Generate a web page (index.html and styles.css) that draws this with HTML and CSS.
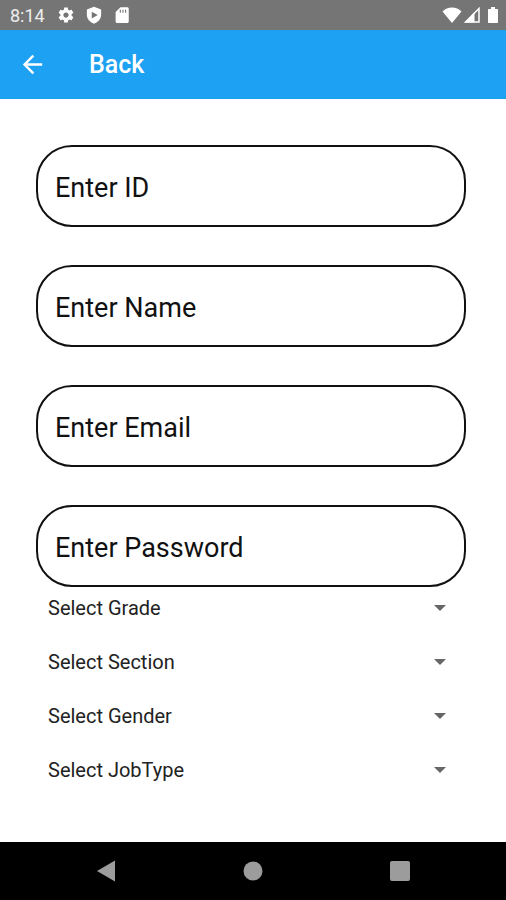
FILE: index.html
```
<!DOCTYPE html>
<html lang="en">
<head>
    <meta charset="UTF-8">
    <meta name="viewport" content="width=device-width, initial-scale=1.0">
    <title>Back</title>
    <link rel="stylesheet" href="styles.css">
</head>
<body>
    <div class="status-bar">
        <span class="status-time">8:14</span>
        <div class="status-icons">
            <svg viewBox="0 0 24 24" fill="currentColor">
                <path d="M19.43 12.98c.04-.32.07-.64.07-.98s-.03-.66-.07-.98l2.11-1.65c.19-.15.24-.42.12-.64l-2-3.46c-.12-.22-.39-.3-.61-.22l-2.49 1c-.52-.4-1.08-.73-1.69-.98l-.38-2.65C14.46 2.18 14.25 2 14 2h-4c-.25 0-.46.18-.49.42l-.38 2.65c-.61.25-1.17.59-1.69.98l-2.49-1c-.23-.09-.49 0-.61.22l-2 3.46c-.13.22-.07.49.12.64l2.11 1.65c-.04.32-.07.65-.07.98s.03.66.07.98l-2.11 1.65c-.19.15-.24.42-.12.64l2 3.46c.12.22.39.3.61.22l2.49-1c.52.4 1.08.73 1.69.98l.38 2.65c.03.24.24.42.49.42h4c.25 0 .46-.18.49-.42l.38-2.65c.61-.25 1.17-.59 1.69-.98l2.49 1c.23.09.49 0 .61-.22l2-3.46c.12-.22.07-.49-.12-.64l-2.11-1.65zM12 15.5c-1.93 0-3.5-1.57-3.5-3.5s1.57-3.5 3.5-3.5 3.500 1.570 3.500 3.500-1.570 3.500-3.500 3.500z"></path>
            </svg>
            <svg viewBox="0 0 24 24" fill="currentColor">
                <path fill-rule="evenodd" d="M12 1L2.500 4.500v7c0 5.500 4 10 9.500 12 5.500-2 9.500-6.500 9.500-12v-7L12 1zM9 7.500l8 4.500-8 4.500z"></path>
            </svg>
            <svg viewBox="0 0 24 24" fill="currentColor">
                <path fill-rule="evenodd" d="M19 1.500H10L3.500 8v12.500c0 1.100.9 2 2 2H19c1.100 0 2-.9 2-2v-17c0-1.100-.9-2-2-2zM9 5h1.500v4H9zM12.500 5H14v4h-1.500zM16 5h1.500v4H16z"></path>
            </svg>
        </div>
        <div class="signal-icons">
            <svg class="wifi-icon" viewBox="0 0 20 16" fill="currentColor">
                <path d="M10 16L.5 4.500C3 2 6.300.5 10 .5s7 1.500 9.500 4z"></path>
            </svg>
            <svg class="cell-icon" viewBox="0 0 16 16">
                <path d="M15 1.500V15H1.500z" fill="none" stroke="currentColor" stroke-width="1.500"></path>
                <path d="M10.500 5v10.500H1z" fill="currentColor"></path>
            </svg>
            <svg class="battery-icon" viewBox="0 0 10 16" fill="currentColor">
                <path d="M3 0h4v2h2c.6 0 1 .4 1 1v12c0 .6-.4 1-1 1H1c-.6 0-1-.4-1-1V3c0-.6.4-1 1-1h2z"></path>
            </svg>
        </div>
    </div>

    <header class="app-bar">
        <button class="back-btn" type="button" aria-label="Go back">
            <svg viewBox="0 0 24 24" fill="currentColor">
                <path d="M20 11H7.830l5.590-5.590L12 4l-8 8 8 8 1.410-1.410L7.830 13H20v-2z"></path>
            </svg>
        </button>
        <h1 class="app-title">Back</h1>
    </header>

    <main class="content">
        <form class="user-form">
            <div class="text-fields">
                <input class="text-field" type="text" name="id" placeholder="Enter ID" aria-label="Enter ID">
                <input class="text-field" type="text" name="name" placeholder="Enter Name" aria-label="Enter Name">
                <input class="text-field" type="email" name="email" placeholder="Enter Email" aria-label="Enter Email">
                <input class="text-field" type="password" name="password" placeholder="Enter Password" aria-label="Enter Password">
            </div>

            <div class="select-fields">
                <div class="select-row">
                    <select name="grade" aria-label="Grade">
                        <option>Select Grade</option>
                    </select>
                </div>
                <div class="select-row">
                    <select name="section" aria-label="Section">
                        <option>Select Section</option>
                    </select>
                </div>
                <div class="select-row">
                    <select name="gender" aria-label="Gender">
                        <option>Select Gender</option>
                    </select>
                </div>
                <div class="select-row">
                    <select name="jobtype" aria-label="Job type">
                        <option>Select JobType</option>
                    </select>
                </div>
            </div>
        </form>
    </main>

    <nav class="nav-bar">
        <button type="button" aria-label="System back">
            <svg viewBox="0 0 20 22" fill="currentColor">
                <path d="M19 .5v21L1 11z"></path>
            </svg>
        </button>
        <button type="button" aria-label="Home">
            <svg viewBox="0 0 20 22" fill="currentColor">
                <circle cx="10" cy="11" r="9.500"></circle>
            </svg>
        </button>
        <button type="button" aria-label="Recent apps">
            <svg viewBox="0 0 20 22" fill="currentColor">
                <rect y="1" width="20" height="20" rx="2"></rect>
            </svg>
        </button>
    </nav>
</body>
</html>
```

FILE: styles.css
```
* {
    margin: 0;
    padding: 0;
    box-sizing: border-box;
}

body {
    display: flex;
    flex-direction: column;
    min-height: 100vh;
    background: #fff;
    color: #111;
    font-family: Roboto, "Liberation Sans", sans-serif;
}

button {
    border: none;
    background: transparent;
    color: inherit;
    cursor: pointer;
}

svg {
    display: block;
}

/* Status bar */
.status-bar {
    display: flex;
    align-items: center;
    height: 30px;
    padding: 0 8px 0 10px;
    background: #757575;
    color: #fff;
}

.status-time {
    font-size: 18px;
    color: #eee;
}

.status-icons {
    display: flex;
    gap: 10px;
    margin-left: 12px;
}

.status-icons svg {
    width: 18px;
    height: 18px;
}

.signal-icons {
    display: flex;
    gap: 2px;
    margin-left: auto;
}

.signal-icons svg {
    height: 16px;
}

.wifi-icon {
    width: 20px;
}

.cell-icon {
    width: 16px;
}

.signal-icons .battery-icon {
    width: 10px;
    margin-left: 6px;
}

/* App bar */
.app-bar {
    display: flex;
    align-items: center;
    gap: 42px;
    height: 69px;
    padding: 0 18px;
    background: #1da1f2;
    color: #fff;
}

.back-btn svg {
    width: 29px;
    height: 29px;
}

.app-title {
    font-size: 25px;
    font-weight: 500;
}

/* Form */
.content {
    flex: 1;
    padding: 46px 40px 40px 36px;
}

.text-fields {
    display: flex;
    flex-direction: column;
    gap: 38px;
}

.text-field {
    width: 100%;
    height: 82px;
    padding: 4px 17px 0;
    border: 2px solid #111;
    border-radius: 36px;
    background: #fff;
    color: #111;
    font-family: inherit;
    font-size: 27px;
    outline: none;
}

.text-field::placeholder {
    color: #111;
    opacity: 1;
}

.select-fields {
    display: flex;
    flex-direction: column;
    gap: 26px;
    padding: 7px 20px 0 12px;
}

.select-row {
    display: flex;
    align-items: center;
    height: 28px;
}

.select-row::after {
    content: "";
    border: 6px solid transparent;
    border-top-color: #666;
    border-bottom: none;
    pointer-events: none;
}

.select-row select {
    flex: 1;
    height: 28px;
    border: none;
    background: transparent;
    color: #222;
    font-family: inherit;
    font-size: 20px;
    appearance: none;
    outline: none;
}

/* Navigation bar */
.nav-bar {
    display: grid;
    grid-template-columns: repeat(3, 1fr);
    height: 58px;
    padding: 0 33px;
    background: #000;
    color: #9c9c9c;
}

.nav-bar button {
    display: flex;
    align-items: center;
    justify-content: center;
}

.nav-bar svg {
    width: 20px;
    height: 22px;
}
```
